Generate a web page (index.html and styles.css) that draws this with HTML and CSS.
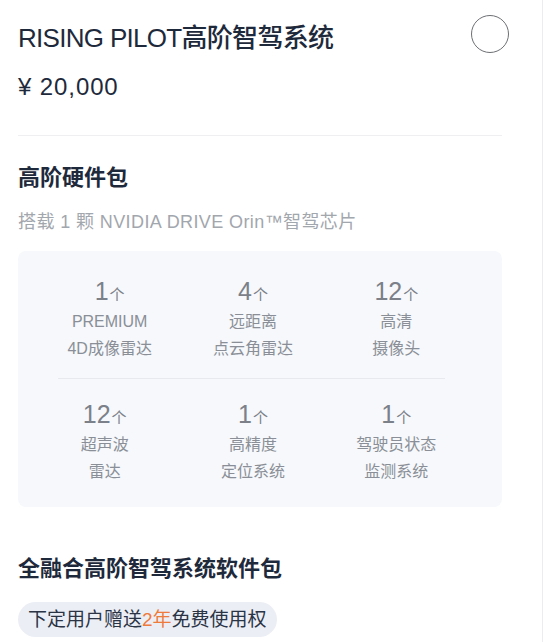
FILE: index.html
```html
<!DOCTYPE html>
<html lang="zh-CN">
<head>
<meta charset="utf-8">
<title>RISING PILOT高阶智驾系统</title>
<link rel="stylesheet" href="styles.css">
</head>
<body>
<div class="page">
  <div class="header">
    <h1 class="title">RISING PILOT高阶智驾系统</h1>
    <span class="radio"></span>
  </div>
  <div class="price">¥ 20,000</div>
  <div class="divider"></div>

  <h2 class="section-title hw">高阶硬件包</h2>
  <p class="subtitle">搭载 1 颗 NVIDIA DRIVE Orin™智驾芯片</p>

  <div class="spec-card">
    <div class="spec-row first">
      <div class="spec"><div class="num">1<span class="unit">个</span></div><div class="label">PREMIUM<br>4D成像雷达</div></div>
      <div class="spec"><div class="num">4<span class="unit">个</span></div><div class="label">远距离<br>点云角雷达</div></div>
      <div class="spec"><div class="num">12<span class="unit">个</span></div><div class="label">高清<br>摄像头</div></div>
    </div>
    <div class="spec-divider"></div>
    <div class="spec-row second">
      <div class="spec shift"><div class="num">12<span class="unit">个</span></div><div class="label">超声波<br>雷达</div></div>
      <div class="spec"><div class="num">1<span class="unit">个</span></div><div class="label">高精度<br>定位系统</div></div>
      <div class="spec"><div class="num">1<span class="unit">个</span></div><div class="label">驾驶员状态<br>监测系统</div></div>
    </div>
  </div>

  <h2 class="section-title sw">全融合高阶智驾系统软件包</h2>
  <div class="pill">下定用户赠送<span class="accent">2年</span>免费使用权</div>
</div>
</body>
</html>
```
FILE: styles.css
```css
html, body {
  margin: 0;
  padding: 0;
  background: #ffffff;
}

body {
  font-family: "Liberation Sans", "Noto Sans CJK SC", sans-serif;
  color: #1f2a3b;
}

.page {
  box-sizing: border-box;
  width: 543px;
  min-height: 642px;
  padding: 21px 40px 0 18px;
  border-right: 1px solid #ececee;
}

.header {
  display: flex;
  justify-content: space-between;
  align-items: flex-start;
}

.title {
  margin: 0;
  font-size: 26px;
  line-height: 34px;
  font-weight: 500;
  letter-spacing: -0.7px;
  color: #1e2a3b;
}

.radio {
  box-sizing: border-box;
  width: 38px;
  height: 38px;
  margin-top: -6px;
  margin-right: -7px;
  border: 1.4px solid #6d6f73;
  border-radius: 50%;
}

.price {
  margin-top: 16px;
  font-size: 24px;
  line-height: 32px;
  letter-spacing: 0.9px;
  color: #1e2a3b;
}

.divider {
  margin-top: 32px;
  height: 1px;
  background: #efeff2;
}

.section-title {
  margin: 0;
  font-size: 22px;
  line-height: 30px;
  font-weight: 700;
  color: #1e2a3b;
}

.section-title.hw {
  margin-top: 27px;
}

.subtitle {
  margin: 16px 0 0;
  font-size: 18px;
  line-height: 26px;
  letter-spacing: 0.4px;
  color: #a2a6ad;
}

.spec-card {
  margin-top: 16px;
  background: #f6f8fb;
  border-radius: 8px;
  padding: 0 34px 0 20px;
}

.spec-row {
  display: grid;
  grid-template-columns: repeat(3, 1fr);
  text-align: center;
}

.spec-row.first {
  padding: 25px 0 16px;
}

.spec-row.second {
  padding: 20px 0 22px;
}

.spec.shift {
  margin-right: 10px;
}

.num {
  font-size: 25px;
  line-height: 30px;
  color: #7b8089;
}

.unit {
  font-size: 15px;
  line-height: 1;
  margin-left: 1px;
}

.label {
  margin-top: 2px;
  font-size: 16px;
  line-height: 27px;
  color: #8a8f97;
}

.spec-divider {
  height: 1px;
  background: #e7e9ee;
  margin: 0 23px 0 20px;
}

.section-title.sw {
  margin-top: 47px;
}

.pill {
  display: inline-block;
  margin-top: 18px;
  padding: 0 10px;
  height: 35px;
  font-size: 19px;
  line-height: 35px;
  color: #2a3445;
  background: #eceef5;
  border-radius: 18px;
}

.accent {
  color: #ee7a3c;
}
```
